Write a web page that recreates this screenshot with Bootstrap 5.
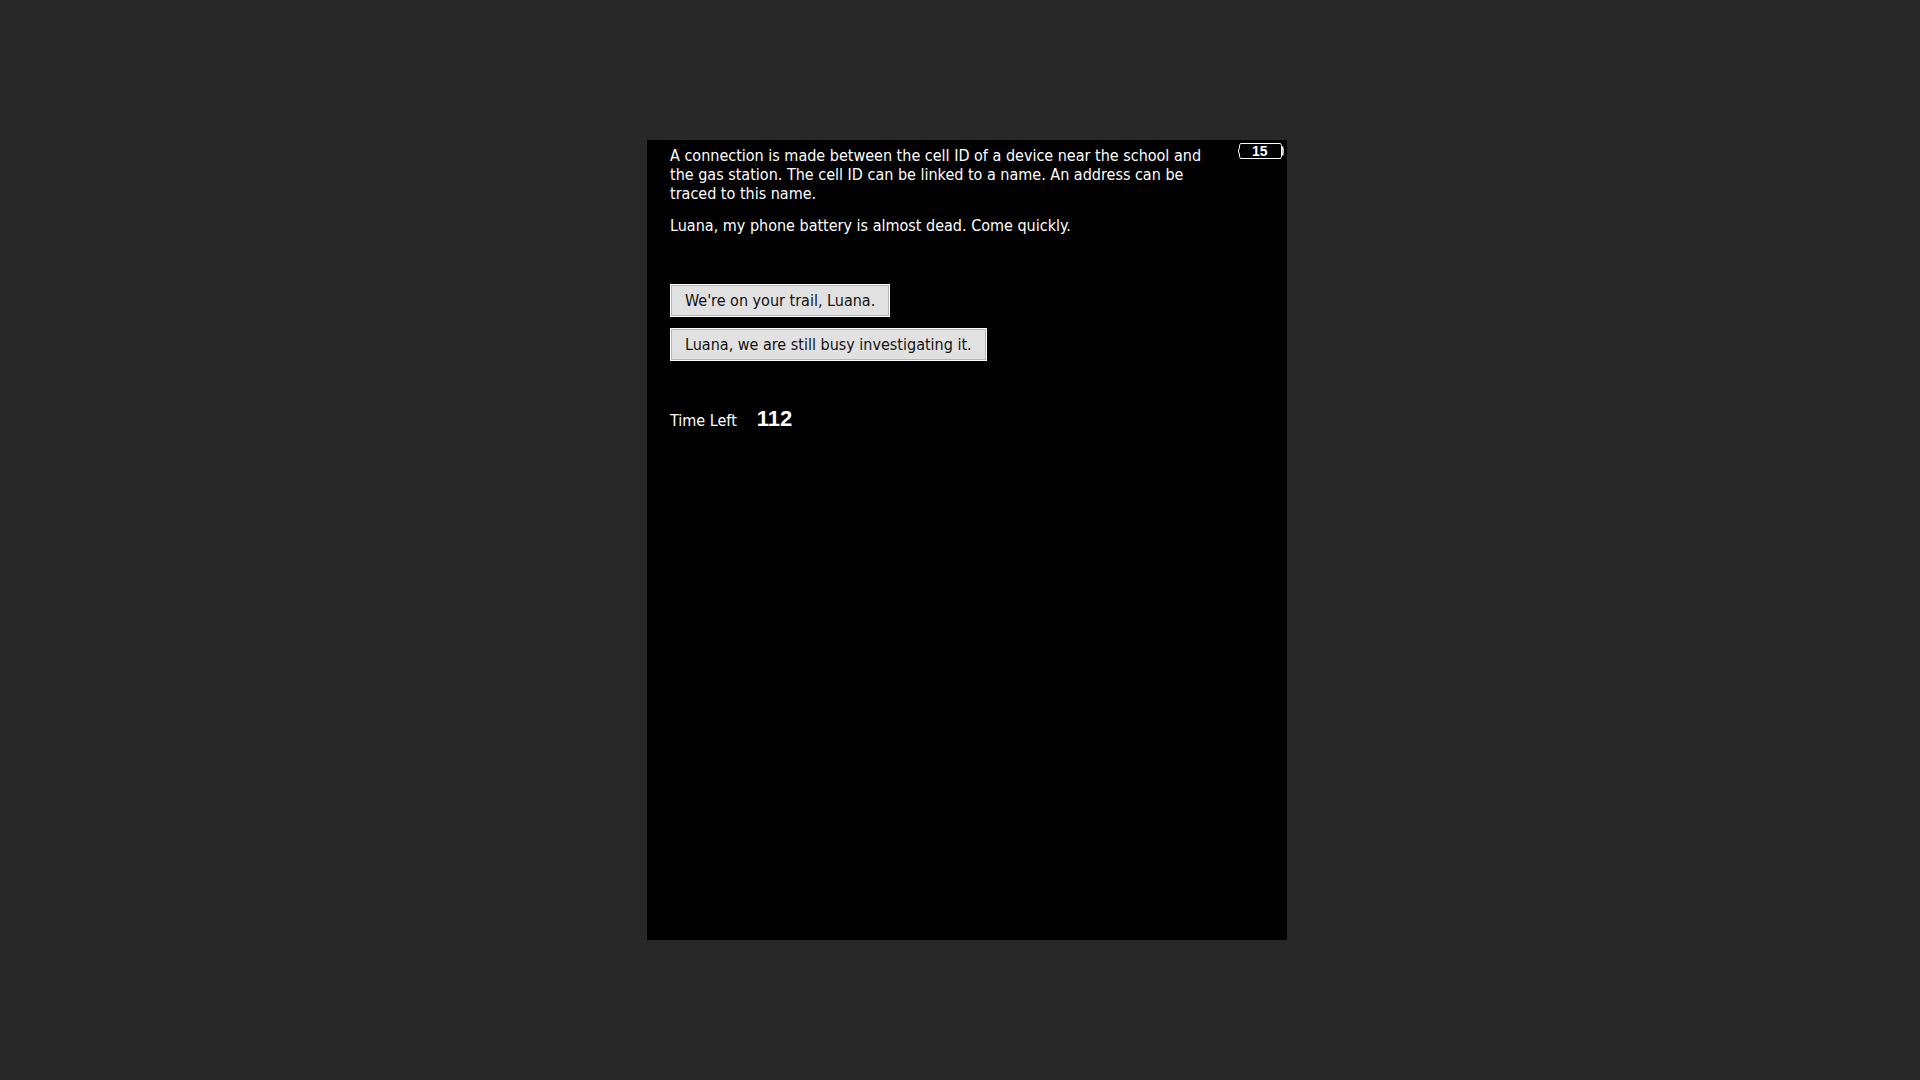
<!DOCTYPE html>
<html lang="en">
<head>
<meta charset="utf-8">
<meta name="viewport" content="width=device-width, initial-scale=1">
<title>Message from Luana</title>
<link href="https://cdn.jsdelivr.net/npm/bootstrap@5.3.0/dist/css/bootstrap.min.css" rel="stylesheet">
<style>
  body { background: #282828; font-family: "DejaVu Sans Condensed", Tahoma, sans-serif; font-size: 16px; line-height: 19px; color: #fff; }
  .stage { padding-left: 14px; }
  .phone { background: #000; max-width: 640px; min-height: 800px; padding: 6px 3px 24px 23px; }
  .story { max-width: 534px; }
  .story p { margin-bottom: 13px; }
  .battery { width: 46px; height: 17px; margin-top: -3px; }
  .battery text, .count { font-family: "Liberation Sans", Arial, sans-serif; font-weight: 700; }
  .battery text { font-size: 14px; }
  .replies { margin-top: 49px; gap: 11px; }
  .reply { background: #e1e1e1; color: #111; border: 1px solid #fff; border-radius: 0; box-shadow: inset 0 0 0 1px #b4b4b4; font-size: 16px; line-height: 19px; padding: 6px 14px; }
  .reply:hover { background: #d2e4f4; color: #111; }
  .timer { margin-top: 46px; gap: 20px; }
  .count { font-size: 22px; line-height: 24px; }
</style>
</head>
<body>
<div class="stage min-vh-100 d-flex align-items-center justify-content-center">
  <main class="phone w-100">
    <div class="d-flex justify-content-between align-items-start">
      <div class="story">
        <p>A connection is made between the cell ID of a device near the school and the gas station. The cell ID can be linked to a name. An address can be traced to this name.</p>
        <p class="mb-0">Luana, my phone battery is almost dead. Come quickly.</p>
      </div>
      <svg class="battery flex-shrink-0" viewBox="0 0 46 17" role="img" aria-label="Battery 15">
        <path d="M2.500 .5H42.500L43.500 2.500V13.500L42.500 15.500H2.500L1.500 13.500V11L.5 9V7L1.500 5V2.500Z" fill="none" stroke="#fff" stroke-width="1"/>
        <path d="M44.500 3.500Q45.500 8 44.500 12.500" fill="none" stroke="#fff" stroke-width="1.500"/>
        <text x="14" y="13" fill="#fff">15</text>
      </svg>
    </div>
    <div class="replies d-flex flex-column align-items-start">
      <button type="button" class="reply btn">We're on your trail, Luana.</button>
      <button type="button" class="reply btn">Luana, we are still busy investigating it.</button>
    </div>
    <div class="timer d-flex align-items-baseline">
      <span>Time Left</span>
      <span class="count">112</span>
    </div>
  </main>
</div>
<script src="https://cdn.jsdelivr.net/npm/bootstrap@5.3.0/dist/js/bootstrap.bundle.min.js"></script>
</body>
</html>
